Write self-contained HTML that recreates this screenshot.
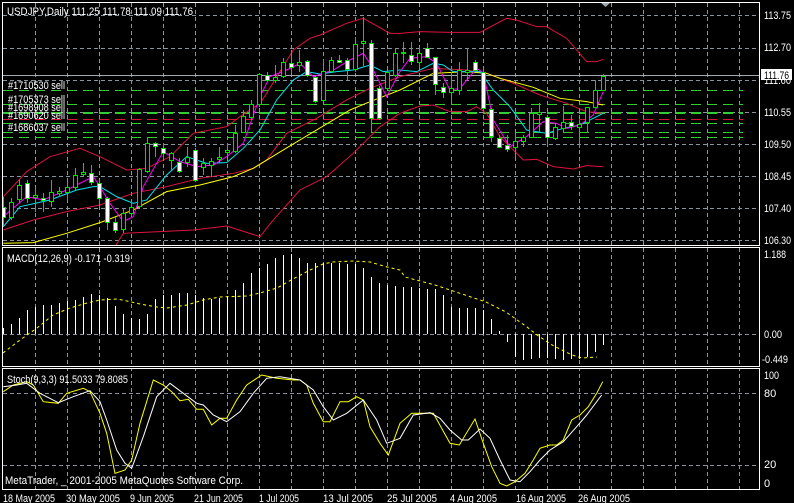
<!DOCTYPE html>
<html><head><meta charset="utf-8"><style>
html,body{margin:0;padding:0;background:#000;width:794px;height:503px;overflow:hidden}
svg{display:block}
text{font-family:"Liberation Sans",sans-serif;font-size:11px;fill:#fff}
</style></head><body>
<svg width="794" height="503" viewBox="0 0 794 503" xmlns="http://www.w3.org/2000/svg">
<rect width="794" height="503" fill="#000"/>
<defs>
<clipPath id="cm"><rect x="3" y="3" width="756" height="242"/></clipPath>
<clipPath id="cd"><rect x="3" y="248" width="756" height="118"/></clipPath>
<clipPath id="cs"><rect x="3" y="369" width="756" height="121"/></clipPath>
</defs>
<g stroke="#8a949e" stroke-width="1" stroke-dasharray="4,3" fill="none">
<path d="M3 15.5H759M3 48.5H759M3 80.5H759M3 112.5H759M3 144.5H759M3 176.5H759M3 208.5H759M3 240.5H759"/>
<path d="M3 334.5H759M3 393.5H759M3 465.5H759"/>
<path d="M35.5 3V490M67.5 3V490M99.5 3V490M131.5 3V490M163.5 3V490M195.5 3V490M227.5 3V490M259.5 3V490M291.5 3V490M323.5 3V490M355.5 3V490M387.5 3V490M419.5 3V490M451.5 3V490M483.5 3V490M515.5 3V490M547.5 3V490M579.5 3V490M611.5 3V490M643.5 3V490M675.5 3V490M707.5 3V490M739.5 3V490"/>
</g>
<rect x="3" y="245" width="757" height="3" fill="#000"/>
<rect x="3" y="366" width="757" height="3" fill="#000"/>
<g stroke-dasharray="10,6" fill="none">
<path d="M3 90.5H743M3 104.5H743M3 123.5H743M3 132.5H743M3 137.5H743" stroke="#32cd32"/>
<path d="M3 113H743" stroke="#32cd32" stroke-width="2"/>
<path d="M3 119.5H743" stroke="#dc143c"/>
</g>
<path d="M3 75.5H759" stroke="#a0a8b0"/>
<g clip-path="url(#cm)" fill="none" stroke-width="1">
<g transform="scale(0.3333)">
<polyline vector-effect="non-scaling-stroke" stroke="#dc143c" points="10,590 80,515 150,470 240,445 300,470 380,510 440,505 510,470 580,400 680,380 720,350 780,310 800,280 880,150 930,115 960,105 1040,70 1090,55 1170,100 1200,100 1260,95 1350,97 1440,97 1520,55 1550,60 1610,80 1640,80 1700,115 1760,185 1790,185 1810,178"/>
<polyline vector-effect="non-scaling-stroke" stroke="#dc143c" points="10,690 100,660 200,635 300,615 400,580 500,560 600,535 700,520 760,505 800,480 860,400 950,355 1040,300 1110,265 1200,230 1300,205 1400,210 1460,220 1540,250 1620,285 1700,310 1760,335 1810,340"/>
<polyline vector-effect="non-scaling-stroke" stroke="#dc143c" points="345,740 370,700 480,695 580,690 680,678 780,710 820,660 900,570 980,530 1060,460 1140,380 1200,340 1260,318 1300,315 1350,335 1400,335 1430,320 1460,340 1500,410 1570,480 1610,478 1660,500 1720,507 1760,497 1810,500"/>
<polyline vector-effect="non-scaling-stroke" stroke="#ffff00" points="10,730 100,728 200,700 300,668 400,630 500,575 600,555 700,530 760,505 850,450 950,390 1050,330 1110,305 1200,270 1300,220 1400,215 1460,220 1500,235 1600,262 1680,295 1760,305 1810,315"/>
<polyline vector-effect="non-scaling-stroke" stroke="#00e5ee" points="10,680 60,620 150,600 230,570 280,560 300,560 350,590 400,610 440,600 500,525 560,470 620,490 680,488 730,445 780,390 830,300 880,240 920,215 960,222 1010,215 1060,210 1110,195 1150,215 1200,210 1250,215 1300,190 1330,195 1360,215 1440,215 1480,270 1530,320 1580,390 1640,400 1690,385 1740,375 1780,355 1810,340"/>
<polyline vector-effect="non-scaling-stroke" stroke="#ff00ff" points="10,650 80,590 130,600 200,570 280,530 300,560 330,610 370,665 400,650 430,560 490,455 540,485 590,500 640,495 680,470 730,430 780,290 810,230 860,210 900,190 940,230 1000,210 1050,180 1090,160 1110,190 1160,290 1200,215 1230,175 1280,170 1310,190 1350,270 1380,265 1430,205 1450,218 1480,360 1530,440 1580,410 1630,365 1670,370 1700,385 1740,375 1780,345 1810,275"/>
</g>
<path stroke="#00e000" d="M3.5 197V227M11.5 198V220M19.5 180V203M27.5 180V203M35.5 187V212M43.5 193V212M51.5 180V207M59.5 187V197M67.5 182V200M75.5 168V190M83.5 163V177M91.5 165V185M99.5 180V207M107.5 197V230M115.5 217V233M123.5 208V233M131.5 202V217M139.5 168V208M147.5 137V173M155.5 142V157M163.5 143V160M171.5 152V170M179.5 158V173M187.5 147V167M195.5 148V182M203.5 158V175M211.5 158V177M219.5 147V163M227.5 143V157M235.5 125V153M243.5 110V133M251.5 100V120M259.5 73V107M267.5 72V82M275.5 65V83M283.5 58V78M291.5 50V73M299.5 50V72M307.5 60V77M315.5 75V103M323.5 60V102M331.5 57V72M339.5 55V63M347.5 58V80M355.5 37V72M363.5 17V67M371.5 40V132M379.5 86V120M387.5 70V90M395.5 48V77M403.5 42V63M411.5 42V65M419.5 47V67M427.5 43V58M435.5 57V95M443.5 83V98M451.5 72V103M459.5 62V95M467.5 48V80M475.5 60V72M483.5 70V110M491.5 108V142M499.5 135V148M507.5 135V152M515.5 133V157M523.5 135V147M531.5 108V138M539.5 103V133M547.5 115V145M555.5 123V140M563.5 106V132M571.5 115V130M579.5 120V148M587.5 107V133M595.5 80V108M603.5 74V91"/>
<g stroke="#00e000" fill="#000">
<rect x="9.5" y="202.5" width="4" height="15"/><rect x="17.5" y="185.5" width="4" height="14"/><rect x="33.5" y="195.5" width="4" height="2"/><rect x="49.5" y="192.5" width="4" height="9"/><rect x="57.5" y="191.5" width="4" height="2"/><rect x="65.5" y="187.5" width="4" height="5"/><rect x="73.5" y="175.5" width="4" height="12"/><rect x="81.5" y="172.5" width="4" height="2"/><rect x="121.5" y="213.5" width="4" height="16"/><rect x="129.5" y="207.5" width="4" height="6"/><rect x="137.5" y="169.5" width="4" height="37"/><rect x="145.5" y="143.5" width="4" height="28"/><rect x="169.5" y="153.5" width="4" height="7"/><rect x="185.5" y="157.5" width="4" height="5"/><rect x="201.5" y="163.5" width="4" height="4"/><rect x="209.5" y="161.5" width="4" height="4"/><rect x="217.5" y="157.5" width="4" height="2"/><rect x="225.5" y="150.5" width="4" height="2"/><rect x="233.5" y="133.5" width="4" height="18"/><rect x="241.5" y="116.5" width="4" height="16"/><rect x="249.5" y="104.5" width="4" height="13"/><rect x="257.5" y="74.5" width="4" height="30"/><rect x="273.5" y="77.5" width="4" height="3"/><rect x="281.5" y="62.5" width="4" height="14"/><rect x="297.5" y="62.5" width="4" height="3"/><rect x="321.5" y="71.5" width="4" height="29"/><rect x="329.5" y="60.5" width="4" height="11"/><rect x="353.5" y="44.5" width="4" height="25"/><rect x="361.5" y="41.5" width="4" height="2"/><rect x="385.5" y="72.5" width="4" height="16"/><rect x="393.5" y="53.5" width="4" height="22"/><rect x="401.5" y="52.5" width="4" height="1"/><rect x="417.5" y="53.5" width="4" height="9"/><rect x="449.5" y="88.5" width="4" height="4"/><rect x="457.5" y="70.5" width="4" height="20"/><rect x="465.5" y="70.5" width="4" height="2"/><rect x="513.5" y="141.5" width="4" height="6"/><rect x="521.5" y="137.5" width="4" height="4"/><rect x="529.5" y="113.5" width="4" height="24"/><rect x="537.5" y="112.5" width="4" height="2"/><rect x="553.5" y="127.5" width="4" height="11"/><rect x="561.5" y="122.5" width="4" height="6"/><rect x="577.5" y="124.5" width="4" height="3"/><rect x="585.5" y="107.5" width="4" height="15"/><rect x="593.5" y="90.5" width="4" height="17"/><rect x="601.5" y="76.5" width="4" height="14"/>
</g>
<g stroke="#00e000" fill="#fff">
<rect x="1.5" y="207.5" width="4" height="10"/><rect x="25.5" y="183.5" width="4" height="15"/><rect x="41.5" y="198.5" width="4" height="2"/><rect x="89.5" y="173.5" width="4" height="9"/><rect x="97.5" y="183.5" width="4" height="15"/><rect x="105.5" y="198.5" width="4" height="24"/><rect x="113.5" y="222.5" width="4" height="8"/><rect x="153.5" y="143.5" width="4" height="3"/><rect x="161.5" y="148.5" width="4" height="5"/><rect x="177.5" y="162.5" width="4" height="9"/><rect x="193.5" y="150.5" width="4" height="30"/><rect x="265.5" y="75.5" width="4" height="5"/><rect x="289.5" y="63.5" width="4" height="4"/><rect x="305.5" y="61.5" width="4" height="14"/><rect x="313.5" y="77.5" width="4" height="24"/><rect x="337.5" y="60.5" width="4" height="2"/><rect x="345.5" y="60.5" width="4" height="9"/><rect x="369.5" y="43.5" width="4" height="75"/><rect x="377.5" y="88.5" width="4" height="30"/><rect x="409.5" y="55.5" width="4" height="6"/><rect x="425.5" y="48.5" width="4" height="9"/><rect x="433.5" y="57.5" width="4" height="27"/><rect x="441.5" y="87.5" width="4" height="5"/><rect x="473.5" y="62.5" width="4" height="8"/><rect x="481.5" y="72.5" width="4" height="36"/><rect x="489.5" y="109.5" width="4" height="27"/><rect x="497.5" y="138.5" width="4" height="9"/><rect x="505.5" y="145.5" width="4" height="4"/><rect x="545.5" y="117.5" width="4" height="20"/><rect x="569.5" y="122.5" width="4" height="4"/>
</g>
</g>
<g clip-path="url(#cd)" fill="none">
<path stroke="#fff" d="M3.5 334V328M11.5 334V324M19.5 334V318M27.5 334V310M35.5 334V307M43.5 334V305M51.5 334V305M59.5 334V303M67.5 334V301M75.5 334V300M83.5 334V297M91.5 334V294M99.5 334V295M107.5 334V298M115.5 334V306M123.5 334V314M131.5 334V318M139.5 334V319M147.5 334V314M155.5 334V299M163.5 334V295M171.5 334V295M179.5 334V293M187.5 334V293M195.5 334V295M203.5 334V298M211.5 334V299M219.5 334V298M227.5 334V296M235.5 334V290M243.5 334V283M251.5 334V273M259.5 334V268M267.5 334V264M275.5 334V258M283.5 334V255M291.5 334V254M299.5 334V258M307.5 334V263M315.5 334V263M323.5 334V263M331.5 334V263M339.5 334V263M347.5 334V264M355.5 334V264M363.5 334V268M371.5 334V277M379.5 334V283M387.5 334V285M395.5 334V286M403.5 334V287M411.5 334V287M419.5 334V288M427.5 334V289M435.5 334V289M443.5 334V295M451.5 334V307M459.5 334V308M467.5 334V308M475.5 334V308M483.5 334V310M491.5 334V319M499.5 334V331M507.5 334V342M515.5 334V357M523.5 334V360M531.5 334V359M539.5 334V358M547.5 334V358M555.5 334V359M563.5 334V360M571.5 334V359M579.5 334V359M587.5 334V357M595.5 334V352M603.5 334V345"/>
<polyline stroke="#ffff00" stroke-dasharray="3,3" points="3,353 20,340 37,328 53,315 70,308 87,303 100,300 117,299 127,301 140,304 157,307 167,308 187,305 203,300 220,297 247,296 260,293 277,288 293,279 310,270 323,264 333,262 353,261 370,262 387,267 400,270 405,277 435,285 456,292 486,302 506,312 527,327 537,335 552,345 572,355 582,358 597,357"/>
</g>
<g clip-path="url(#cs)" fill="none">
<polyline stroke="#ffff00" points="3.3,391.7 13.3,385 26.7,381.7 33.3,385 43.3,401.7 58.3,403.3 66.7,393.3 83.3,388.3 90,391.7 100,413.3 106.7,433.3 115,473.3 125,470 131.7,460 140,423.3 153.3,380 163.3,385 171.7,391.7 180,400.7 188.3,399.3 196.7,409.3 203.3,409.3 211.7,425 220,418.3 226.7,418.3 236.7,400 246.7,385 261.7,375 276.7,378.3 293.3,380 300,380 306.7,385 313.3,403.3 323.3,421.7 330,421.7 340,401.7 348.3,401.7 356.7,396.7 363.3,400 370,426.7 380,443.3 388.3,455 400,423.3 411.7,413.3 433.3,413.3 450,443.3 459.3,445 475,419 483.3,443.3 491.7,466.7 500,483.3 506.7,486 515,481.7 525,473.3 533.3,460 540,448.3 550,445 556.7,445 563.3,440 571.7,420 580,415 588.3,406.7 596.7,393.3 602.7,381.7"/>
<polyline stroke="#fff" points="3.3,386.7 16.7,385 26.7,383.3 40,393.3 58.3,402.7 73.3,396.7 90,390.7 100,401.7 106.7,420 116.7,450 125,463.3 131.7,468.3 143.3,436.7 156.7,396.7 170,383.3 183.3,393.3 196.7,403.3 203.3,405 213.3,415 226.7,421.7 240,411.7 253.3,393.3 266.7,378.3 280,376.7 300,380 313.3,390 323.3,406.7 333.3,420 346.7,413.3 363.3,400 376.7,420 386.7,443.3 400,438.3 413.3,415 430,412.7 440,418.3 450,430 461.7,440 468.3,440 480,429 490,438.3 500,460 510,480 520,481.7 530,471.7 540,460 550,450 563.3,441.7 576.7,426.7 586.7,415 601.7,395"/>
</g>
<g stroke="#fff" fill="none">
<rect x="2.5" y="2.5" width="757" height="243"/>
<rect x="2.5" y="247.5" width="757" height="119"/>
<rect x="2.5" y="368.5" width="757" height="121"/>
</g>
<path d="M601 3h9l-4.5 4z" fill="#a0a8b0"/>
<text x="7" y="15" textLength="186" lengthAdjust="spacingAndGlyphs">USDJPY,Daily  111.25 111.78 111.09 111.76</text>
<text x="8" y="89" textLength="57" lengthAdjust="spacingAndGlyphs">#1710530 sell</text>
<text x="8" y="103" textLength="57" lengthAdjust="spacingAndGlyphs">#1705373 sell</text>
<text x="8" y="111" textLength="57" lengthAdjust="spacingAndGlyphs">#1698908 sell</text>
<text x="8" y="119" textLength="57" lengthAdjust="spacingAndGlyphs">#1690620 sell</text>
<text x="8" y="131" textLength="57" lengthAdjust="spacingAndGlyphs">#1686037 sell</text>
<text x="7" y="262" textLength="123" lengthAdjust="spacingAndGlyphs">MACD(12,26,9) -0.171 -0.319</text>
<text x="7" y="383" textLength="121" lengthAdjust="spacingAndGlyphs">Stoch(9,3,3) 91.5033 79.8085</text>
<text x="5" y="484" textLength="238" lengthAdjust="spacingAndGlyphs">MetaTrader, _ 2001-2005 MetaQuotes Software Corp.</text>
<g>
<text x="764" y="19" textLength="27" lengthAdjust="spacingAndGlyphs">113.75</text>
<text x="764" y="51" textLength="27" lengthAdjust="spacingAndGlyphs">112.70</text>
<text x="764" y="84" textLength="27" lengthAdjust="spacingAndGlyphs">111.60</text>
<text x="764" y="116" textLength="27" lengthAdjust="spacingAndGlyphs">110.55</text>
<text x="764" y="148" textLength="27" lengthAdjust="spacingAndGlyphs">109.50</text>
<text x="764" y="180" textLength="27" lengthAdjust="spacingAndGlyphs">108.45</text>
<text x="764" y="212" textLength="27" lengthAdjust="spacingAndGlyphs">107.40</text>
<text x="764" y="244" textLength="27" lengthAdjust="spacingAndGlyphs">106.30</text>
<rect x="761" y="69" width="31" height="11" fill="#fff"/>
<text x="764" y="79" textLength="25" lengthAdjust="spacingAndGlyphs" style="fill:#000">111.76</text>
<text x="764" y="258" textLength="22" lengthAdjust="spacingAndGlyphs">1.188</text>
<text x="764" y="338" textLength="18" lengthAdjust="spacingAndGlyphs">0.00</text>
<text x="762" y="363" textLength="26" lengthAdjust="spacingAndGlyphs">-0.449</text>
<text x="764" y="379" textLength="15" lengthAdjust="spacingAndGlyphs">100</text>
<text x="764" y="397">80</text>
<text x="764" y="468">20</text>
<text x="764" y="487">0</text>
</g>
<g>
<text x="3" y="502" textLength="52" lengthAdjust="spacingAndGlyphs">18 May 2005</text>
<text x="66" y="502" textLength="54" lengthAdjust="spacingAndGlyphs">30 May 2005</text>
<text x="130" y="502" textLength="44" lengthAdjust="spacingAndGlyphs">9 Jun 2005</text>
<text x="194" y="502" textLength="49" lengthAdjust="spacingAndGlyphs">21 Jun 2005</text>
<text x="259" y="502" textLength="40" lengthAdjust="spacingAndGlyphs">1 Jul 2005</text>
<text x="323" y="502" textLength="50" lengthAdjust="spacingAndGlyphs">13 Jul 2005</text>
<text x="387" y="502" textLength="50" lengthAdjust="spacingAndGlyphs">25 Jul 2005</text>
<text x="450" y="502" textLength="47" lengthAdjust="spacingAndGlyphs">4 Aug 2005</text>
<text x="516" y="502" textLength="50" lengthAdjust="spacingAndGlyphs">16 Aug 2005</text>
<text x="578" y="502" textLength="52" lengthAdjust="spacingAndGlyphs">26 Aug 2005</text>
</g>
</svg>
</body></html>
